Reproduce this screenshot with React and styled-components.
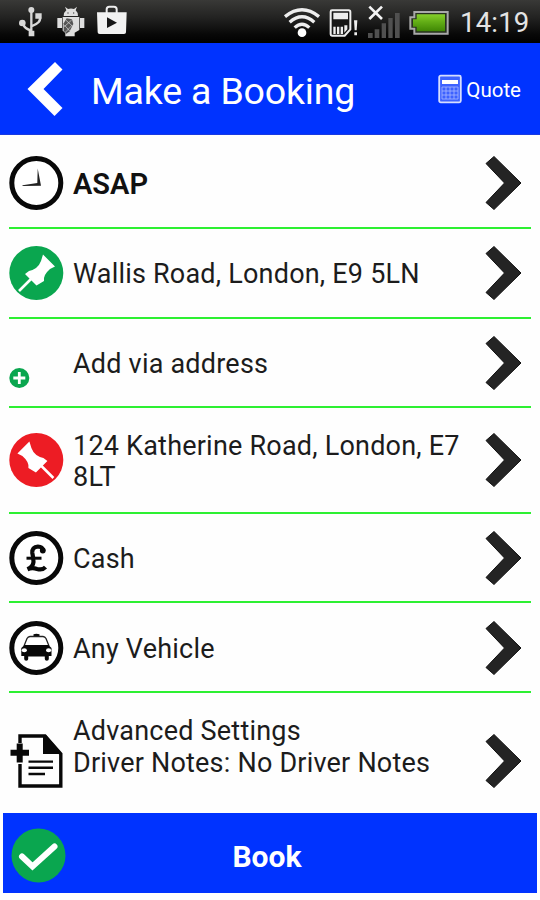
import React from 'react';
import styled, { createGlobalStyle } from 'styled-components';

const BLUE = '#0033ff';
const GREEN = '#0aa64f';

const GlobalStyle = createGlobalStyle`
  * {
    box-sizing: border-box;
  }

  body {
    margin: 0;
    background: #fff;
    font-family: Roboto, 'Liberation Sans', sans-serif;
  }
`;

const Screen = styled.div`
  display: flex;
  flex-direction: column;
  width: 540px;
  height: 900px;
  overflow: hidden;
  background: #fefefe;
`;

const StatusBar = styled.div`
  display: flex;
  align-items: flex-start;
  justify-content: space-between;
  flex: none;
  height: 43px;
  padding: 4px 11px 0 16px;
  background: linear-gradient(#393937 0, #232322 40%, #080808 80%, #000 100%);
`;

const StatusGroup = styled.div`
  display: flex;
  gap: ${props => props.$gap}px;
`;

const Clock = styled.span`
  width: 69px;
  margin-left: 3px;
  color: #e4e4e4;
  font-size: 27.5px;
  line-height: 38px;
  letter-spacing: 0.2px;
  white-space: nowrap;
`;

const Header = styled.header`
  display: flex;
  align-items: center;
  flex: none;
  height: 92px;
  padding: 0 19px 0 27px;
  color: #fff;
  background: ${BLUE};
  border-bottom: 1px solid #1a3be0;
`;

const Title = styled.h1`
  flex: 1;
  margin: 5px 0 0 28px;
  font-size: 37.5px;
  font-weight: 400;
  line-height: 44px;
  letter-spacing: -0.18px;
  white-space: nowrap;
`;

const Quote = styled.div`
  display: flex;
  align-items: center;
  gap: 4px;
  font-size: 20.5px;
  line-height: 28px;

  span {
    margin-top: 3px;
  }
`;

const Row = styled.div`
  display: flex;
  align-items: center;
  flex: none;
  height: ${props => props.$height}px;
  margin: 0 9px;
  padding-top: ${props => props.$top || 0}px;
  border-bottom: ${props => (props.$last ? 'none' : '2px solid #2df032')};
`;

const IconSlot = styled.div`
  display: flex;
  flex: none;
  width: 55px;
  height: 54px;
  align-items: flex-end;
`;

const Label = styled.div`
  flex: 1;
  margin: ${props => props.$shift ?? 4}px 0 0 9px;
  color: #1c1c1c;
  font-size: 27px;
  line-height: 31.5px;
  letter-spacing: 0.21px;
  white-space: pre-line;
`;

const StrongLabel = styled(Label)`
  color: #111;
  font-size: 29px;
  font-weight: 600;
  letter-spacing: 0;
`;

const BookButton = styled.div`
  display: flex;
  align-items: center;
  flex: none;
  height: 80px;
  margin: 0 3px;
  padding: 4px 8px 0;
  color: #fff;
  background: ${BLUE};
`;

const BookLabel = styled.span`
  flex: 1;
  margin-top: 4px;
  padding-right: 62px;
  font-size: 30px;
  font-weight: 700;
  line-height: 36px;
  text-align: center;
`;

const Chevron = styled(({ className }) => (
  <svg className={className} width="37" height="56" viewBox="0 0 37 56">
    <path d="M9 1.5 36 28 9 54.5 1 47.5 19.5 28 1 8.5Z" fill="#242424" stroke="#111" />
  </svg>
))`
  flex: none;
  margin-right: 9px;
`;

const UsbIcon = () => (
  <svg width="30" height="36" viewBox="48 12 90 108" fill="none" stroke="#d8d8d8">
    <path d="M94 32V102M70 72Q72 85 94 92M119 50Q126 68 94 79" strokeWidth="7" />
    <circle cx="94" cy="30" r="9" fill="#d8d8d8" stroke="none" />
    <circle cx="67" cy="69" r="10" fill="#d8d8d8" stroke="none" />
    <path d="M106 40H125V56H106ZM86 92H103V109H86Z" fill="#d8d8d8" stroke="none" />
  </svg>
);

const AndroidIcon = () => (
  <svg width="30" height="36" viewBox="170 12 90 108" fill="#dedede">
    <path d="M197 20 206 27Q215 24 224 27L233 20 229 31Q236 37 236 48H193Q193 37 201 31Z" />
    <path d="M174 54H188V84H174ZM242 54H255V84H242ZM190 51H240V90L226 98V109H198V98L190 92Z" />
    <path d="M202 55 218 58 222 72 211 94 201 101 193 92V70Z" fill="#555" />
    <path d="M199 60 219 78M195 75 212 94M217 60 195 80M219 75 197 98" stroke="#ddd" strokeWidth="2" />
    <circle cx="206" cy="39" r="2" fill="#444" />
    <circle cx="223" cy="39" r="2" fill="#444" />
  </svg>
);

const StoreIcon = () => (
  <svg width="32" height="36" viewBox="288 12 96 108">
    <path d="M320 39V28Q320 20 328 20H342Q350 20 350 28V39" fill="none" stroke="#eee" strokeWidth="6" />
    <path d="M291 37H380L378 97Q378 102 372 102H299Q293 102 293 97Z" fill="#f2f2f2" />
    <path d="M321 52V84L351 68Z" fill="#171717" />
  </svg>
);

const WifiIcon = () => (
  <svg width="38" height="36" viewBox="47 12 114 108" fill="none" stroke="#eee" strokeWidth="10">
    <path d="M53 50Q104 9 155 50M67 67Q104 34 141 67M82 83Q104 62 126 83" />
    <circle cx="104" cy="98" r="13" fill="#fff" stroke="none" />
  </svg>
);

const SimIcon = () => (
  <svg width="30" height="36" viewBox="182 12 90 108">
    <path d="M191 31H241Q246 31 246 36V88L229 107H191Q187 107 187 103V35Q187 31 191 31Z" fill="#171717" stroke="#eee" strokeWidth="6" />
    <path d="M195 38H239V58H195ZM195 80H202V102H195ZM206 80H213V102H206ZM217 80H224V102H217ZM228 76H237V88L228 98Z" fill="#eee" />
    <path d="M257 61H267L265 91H259ZM258 97H266V106H258Z" fill="#eee" />
  </svg>
);

const SignalIcon = () => (
  <svg width="34" height="36" viewBox="294 12 102 108">
    <path d="M297 99H311V114H297ZM317 88H331V114H317ZM338 70H351V114H338ZM358 54H371V114H358ZM378 39H392V114H378Z" fill="#505050" />
    <path d="M301 20 339 57M339 20 301 57" stroke="#f4f4f4" strokeWidth="8" />
  </svg>
);

const BatteryIcon = () => (
  <svg width="40" height="36" viewBox="418 12 120 108">
    <defs>
      <linearGradient id="charge" x1="0" y1="0" x2="0" y2="1">
        <stop offset="0" stopColor="#86cf2a" />
        <stop offset="0.45" stopColor="#62ad16" />
        <stop offset="1" stopColor="#3f8604" />
      </linearGradient>
    </defs>
    <path d="M434 36H534V101H434V86H422V52H434Z" fill="#27301f" stroke="#a9a9a9" strokeWidth="6" />
    <path d="M441 43H526V94H441V80H430V58H441Z" fill="url(#charge)" />
  </svg>
);

const BackIcon = () => (
  <svg width="36" height="56" viewBox="0 0 36 56">
    <path d="M28 1 35.5 8.5 16.5 28 35.5 47 27.5 55 .5 28Z" fill="#fff" />
  </svg>
);

const CalculatorIcon = () => (
  <svg width="24" height="30" viewBox="0 0 24 30">
    <rect x="1.2" y="1.7" width="21.6" height="26.6" rx="1.5" fill="#3d62ff" stroke="#d6deff" strokeWidth="1.8" />
    <rect x="4" y="6" width="16" height="4" fill="#fff" />
    <path d="M4 13H20M4 17H20M4 21H20M4 25H20M4 13V25M8 13V25M12 13V25M16 13V25M20 13V25" stroke="#a9b9ff" strokeWidth="0.8" />
  </svg>
);

const ClockIcon = () => (
  <svg width="55" height="54" viewBox="0 0 55 54">
    <circle cx="27.3" cy="27" r="24.5" fill="#fff" stroke="#080808" strokeWidth="5" />
    <path d="M28.7 12.5 32 29.7 13.5 30 13.5 29.2 28.3 27Z" fill="#222" />
  </svg>
);

const PinIcon = ({ color, flip }) => (
  <svg width="55" height="54" viewBox="0 0 55 54">
    <circle cx="27.3" cy="27" r="27" fill={color} />
    <g transform={flip ? 'matrix(-1 0 0 1 54.4 0)' : undefined}>
      <path d="M34 8.5 46 20.5 41 23Q34 29 35 35L27.5 39.5 16 28 20 25Q29 23 32 15Z" fill="#fff" />
      <path d="M23 32 10 45" stroke="#fff" strokeWidth="2.6" />
    </g>
  </svg>
);

const AddIcon = () => (
  <svg width="21" height="22" viewBox="0 0 21 22">
    <circle cx="10.3" cy="10" r="10" fill={GREEN} />
    <path d="M10.3 4V16M4.3 10H16.3" stroke="#fff" strokeWidth="2.8" />
  </svg>
);

const PoundIcon = () => (
  <svg width="55" height="54" viewBox="0 0 55 54">
    <circle cx="27.3" cy="27" r="24.5" fill="#fff" stroke="#080808" strokeWidth="5" />
    <path d="M34.5 20Q33.5 15.5 29 15.5 22.8 16 23.3 22 24.5 27 24.5 31 24 36 18.5 38.3 23 36.3 28 38 33.5 39.5 36.5 36.2" fill="none" stroke="#080808" strokeWidth="4.2" />
    <path d="M17.5 27.2H32.5" stroke="#080808" strokeWidth="3" />
    <circle cx="33.8" cy="19.5" r="2.9" fill="#080808" />
  </svg>
);

const TaxiIcon = () => (
  <svg width="55" height="54" viewBox="0 0 55 54">
    <circle cx="27.3" cy="27" r="24.5" fill="#fff" stroke="#080808" strokeWidth="5" />
    <path d="M24.5 15V13.3Q27.4 12.3 30.5 13.3V15Z" fill="#080808" />
    <path d="M15 25 18 17.5Q19 15.7 21 15.5H34Q36 15.7 37 17.5L40 25" fill="#fff" stroke="#222" strokeWidth="1.3" />
    <path d="M15.5 24H39.5L42.5 27V35H39.8V38Q39.8 39.8 37.8 39.8 35.8 39.8 35.8 38V35.5H19.2V38Q19.2 39.8 17.2 39.8 15.2 39.8 15.2 38V35H12.3V27Z" fill="#080808" />
    <ellipse cx="15.3" cy="29.3" rx="2.6" ry="2" fill="#fff" />
    <ellipse cx="39.6" cy="29.3" rx="2.6" ry="2" fill="#fff" />
  </svg>
);

const NotesIcon = () => (
  <svg width="55" height="54" viewBox="0 0 55 54">
    <path d="M11 9V2H36L51.8 20V52H11V30" fill="none" stroke="#080808" strokeWidth="3.4" />
    <path d="M34 1H37L53 20H34Z" fill="#080808" />
    <path d="M10.7 9.5V28.5M1.5 18.7H20" stroke="#080808" strokeWidth="6" />
    <path d="M19.5 27.6H44M19.5 33.8H44M19.5 40H36" stroke="#080808" strokeWidth="2.4" />
  </svg>
);

const CheckIcon = () => (
  <svg width="56" height="56" viewBox="0 0 56 56">
    <circle cx="27.5" cy="28.5" r="27" fill={GREEN} />
    <path d="M11 29.5 21.5 39.5 43.5 19.5" fill="none" stroke="#fff" strokeWidth="6" strokeLinecap="round" />
  </svg>
);

const App = () => (
  <>
    <GlobalStyle />
    <Screen>
      <StatusBar>
        <StatusGroup $gap={10}>
          <UsbIcon />
          <AndroidIcon />
          <StoreIcon />
        </StatusGroup>
        <StatusGroup $gap={8}>
          <WifiIcon />
          <SimIcon />
          <SignalIcon />
          <BatteryIcon />
          <Clock>14:19</Clock>
        </StatusGroup>
      </StatusBar>
      <Header>
        <BackIcon />
        <Title>Make a Booking</Title>
        <Quote>
          <CalculatorIcon />
          <span>Quote</span>
        </Quote>
      </Header>
      <Row $height={94} $top={3}>
        <IconSlot><ClockIcon /></IconSlot>
        <StrongLabel>ASAP</StrongLabel>
        <Chevron />
      </Row>
      <Row $height={90}>
        <IconSlot><PinIcon color={GREEN} /></IconSlot>
        <Label>Wallis Road, London, E9 5LN</Label>
        <Chevron />
      </Row>
      <Row $height={89}>
        <IconSlot><AddIcon /></IconSlot>
        <Label>Add via address</Label>
        <Chevron />
      </Row>
      <Row $height={106}>
        <IconSlot><PinIcon color="#ed1c24" flip /></IconSlot>
        <Label>124 Katherine Road, London, E7 8LT</Label>
        <Chevron />
      </Row>
      <Row $height={89}>
        <IconSlot><PoundIcon /></IconSlot>
        <Label>Cash</Label>
        <Chevron />
      </Row>
      <Row $height={90} $top={1}>
        <IconSlot><TaxiIcon /></IconSlot>
        <Label>Any Vehicle</Label>
        <Chevron />
      </Row>
      <Row $height={120} $top={16} $last>
        <IconSlot><NotesIcon /></IconSlot>
        <Label $shift={-27}>{'Advanced Settings\nDriver Notes: No Driver Notes'}</Label>
        <Chevron />
      </Row>
      <BookButton>
        <CheckIcon />
        <BookLabel>Book</BookLabel>
      </BookButton>
    </Screen>
  </>
);

export default App;
